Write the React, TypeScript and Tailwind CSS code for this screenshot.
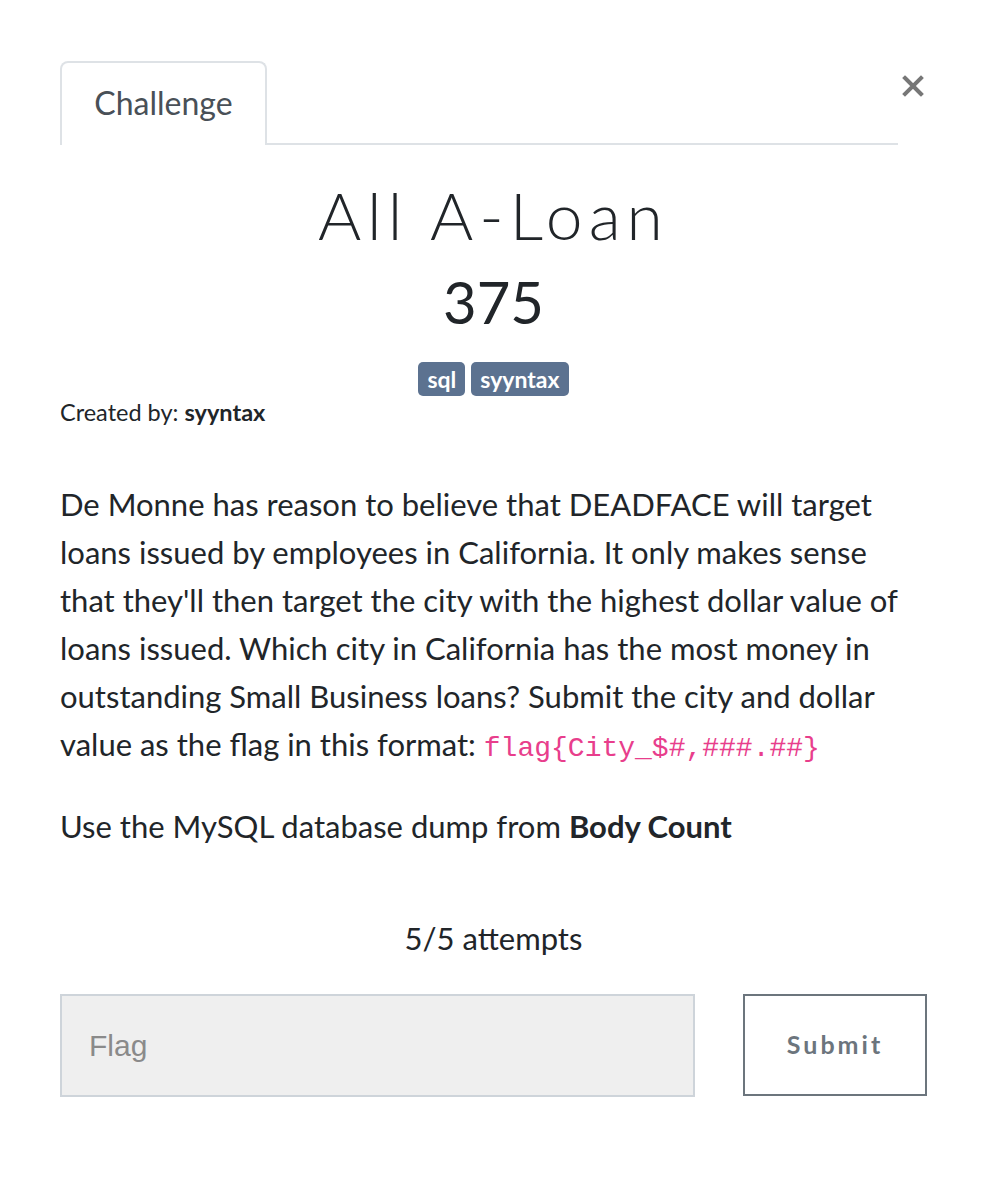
import React from "react";

export default function App() {
  return (
    <div className="min-h-[1192px] w-[987px] bg-white px-[60px] pt-[61px] text-[#212529]" style={{ fontFamily: "Lato, 'Noto Sans', sans-serif" }}>
      <div className="flex items-start">
        <div className="flex flex-1 border-b-2 border-[#dee2e6]">
          <div className="-mb-[2px] flex h-[84px] w-[207px] items-center justify-center rounded-t-[8px] border-2 border-b-0 border-[#dee2e6] bg-white pb-[2px] text-[32px] text-[#495057]">
            Challenge
          </div>
        </div>
        <button className="mt-[10px] flex h-[30px] w-[29px] items-center justify-center">
          <svg width="22" height="22" viewBox="0 0 22 22">
            <path d="M3 3 L19 19 M19 3 L3 19" stroke="#777" strokeWidth="4" strokeLinecap="square" />
          </svg>
        </button>
      </div>

      <div className="pt-[32px] text-center">
        <h2 className="text-[66px] font-light leading-[76px] tracking-[6px] text-[#212529]" style={{ fontFamily: "Lato, sans-serif" }}>
          All A-Loan
        </h2>
        <h3 className="mt-[17px] text-[58px] leading-[64px]">375</h3>
        <div className="mt-[28px] flex justify-center gap-[6px]">
          <span className="rounded-[5px] bg-[#5c7290] px-[9px] text-[23px] font-bold leading-[34px] text-white">sql</span>
          <span className="rounded-[5px] bg-[#5c7290] px-[9px] text-[23px] font-bold leading-[34px] text-white">syyntax</span>
        </div>
      </div>
      <div className="mt-[1px] text-[23.5px] leading-[30px]">
        Created by: <span className="font-bold">syyntax</span>
      </div>

      <div className="mt-[53px] text-[31px] leading-[48px]">
        <p>
          De Monne has reason to believe that DEADFACE will target loans issued by employees in California. It only makes sense that they'll then target the city with the highest dollar value of loans issued. Which city in California has the most money in outstanding Small Business loans? Submit the city and dollar value as the flag in this format:{" "}
          <code className="text-[28px] text-[#e83e8c]" style={{ fontFamily: "'Liberation Mono', monospace" }}>
            flag{"{"}City_$#,###.##{"}"}
          </code>
        </p>
        <p className="mt-[29px]">
          Use the MySQL database dump from <span className="font-bold">Body Count</span>
        </p>
      </div>

      <div className="mt-[64px] text-center text-[31px] leading-[48px]">5/5 attempts</div>

      <div className="mt-[32px] flex gap-[48px]">
        <div className="flex h-[103px] flex-1 items-center border-2 border-[#ced4da] bg-[#efefef] px-[27px]">
          <span className="text-[30px] text-[#8a8a8a]" style={{ fontFamily: "'Liberation Sans', Arial, sans-serif" }}>Flag</span>
        </div>
        <button className="flex h-[102px] w-[184px] items-center justify-center border-2 border-[#6c757d] bg-white text-[25px] font-bold tracking-[3px] text-[#6c757d]">
          Submit
        </button>
      </div>
    </div>
  );
}
